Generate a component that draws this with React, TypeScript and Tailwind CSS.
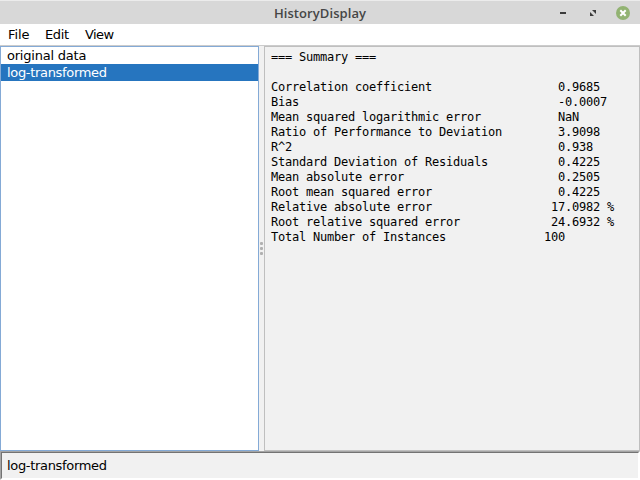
const rows: [string, string][] = [
  ["=== Summary ===", ""],
  ["", ""],
  ["Correlation coefficient", "  0.9685"],
  ["Bias", "  -0.0007"],
  ["Mean squared logarithmic error", "  NaN"],
  ["Ratio of Performance to Deviation", "  3.9098"],
  ["R^2", "  0.938"],
  ["Standard Deviation of Residuals", "  0.4225"],
  ["Mean absolute error", "  0.2505"],
  ["Root mean squared error", "  0.4225"],
  ["Relative absolute error", " 17.0982 %"],
  ["Root relative squared error", " 24.6932 %"],
  ["Total Number of Instances", "100"],
];

function TitleBar() {
  return (
    <header className="grid h-6 shrink-0 grid-cols-[1fr_auto_1fr] items-center border-t border-[#ececec] bg-[#d8d8d8]">
      <span />
      <h1 className="mt-px font-['Open_Sans','Noto_Sans',sans-serif] text-[13px] leading-4 font-semibold tracking-[0.08px] text-[#464646]">
        HistoryDisplay
      </h1>
      <div className="flex items-center justify-end pr-[10px]">
        <span className="mr-6 h-0.5 w-1.5 bg-[#3c3c3c]" />
        <svg className="mr-[20px]" width="6" height="6" viewBox="0 0 6 6" fill="#3c3c3c">
          <path d="M2 0H6V4Z M0 2V6H4Z" />
        </svg>
        <svg width="14" height="14" viewBox="0 0 14 14">
          <circle cx="7" cy="7" r="7" fill="#92b372" />
          <path d="M4.3 4.3L9.7 9.7M9.7 4.3L4.3 9.7" stroke="#fff" strokeWidth="2" />
        </svg>
      </div>
    </header>
  );
}

export default function App() {
  return (
    <div className="flex h-[480px] w-[640px] flex-col overflow-hidden bg-[#f1f1f1] font-['DejaVu_Sans',sans-serif] text-[13px] text-black">
      <TitleBar />
      <nav className="flex h-[21px] shrink-0 items-center bg-white pl-2 leading-[21px]">
        <span className="w-[37px] tracking-[-0.1px]">File</span>
        <span className="w-10 tracking-[-0.4px]">Edit</span>
        <span className="tracking-[-0.6px]">View</span>
      </nav>
      <main className="flex h-[406px] shrink-0 border-t border-[#cccccc]">
        <ul className="w-[259px] border border-[#84aad6] bg-white">
          <li className="h-[17px] pl-1.5 leading-[17px] tracking-[-0.22px]">original data</li>
          <li className="h-[17px] bg-[#2675bf] pl-1.5 leading-[17px] tracking-[-0.32px] text-white">log-transformed</li>
        </ul>
        <div className="flex w-[5px] flex-col items-center justify-center gap-0.5">
          <i className="size-[3px] rounded-[1px] bg-[#b0b0b0]" />
          <i className="size-[3px] rounded-[1px] bg-[#b0b0b0]" />
          <i className="size-[3px] rounded-[1px] bg-[#b0b0b0]" />
        </div>
        <section className="flex-1 border border-[#bfbfbf] pt-[3px] pl-1.5 font-['DejaVu_Sans_Mono',monospace] text-[12px] leading-[15px] tracking-[-0.224px]">
          {rows.map(([label, value], i) => (
            <div key={i} className="flex h-[15px] whitespace-pre">
              <span className="w-[273px]">{label}</span>
              <span>{value}</span>
            </div>
          ))}
        </section>
      </main>
      <footer className="h-[29px] shrink-0 border border-t-[#a5a5a5] border-r-white border-b-white border-l-[#a5a5a5]">
        <div className="h-[27px] border border-t-[#737373] border-r-white border-b-white border-l-[#737373] pl-[5px] leading-[25px] tracking-[-0.32px]">
          log-transformed
        </div>
      </footer>
    </div>
  );
}
